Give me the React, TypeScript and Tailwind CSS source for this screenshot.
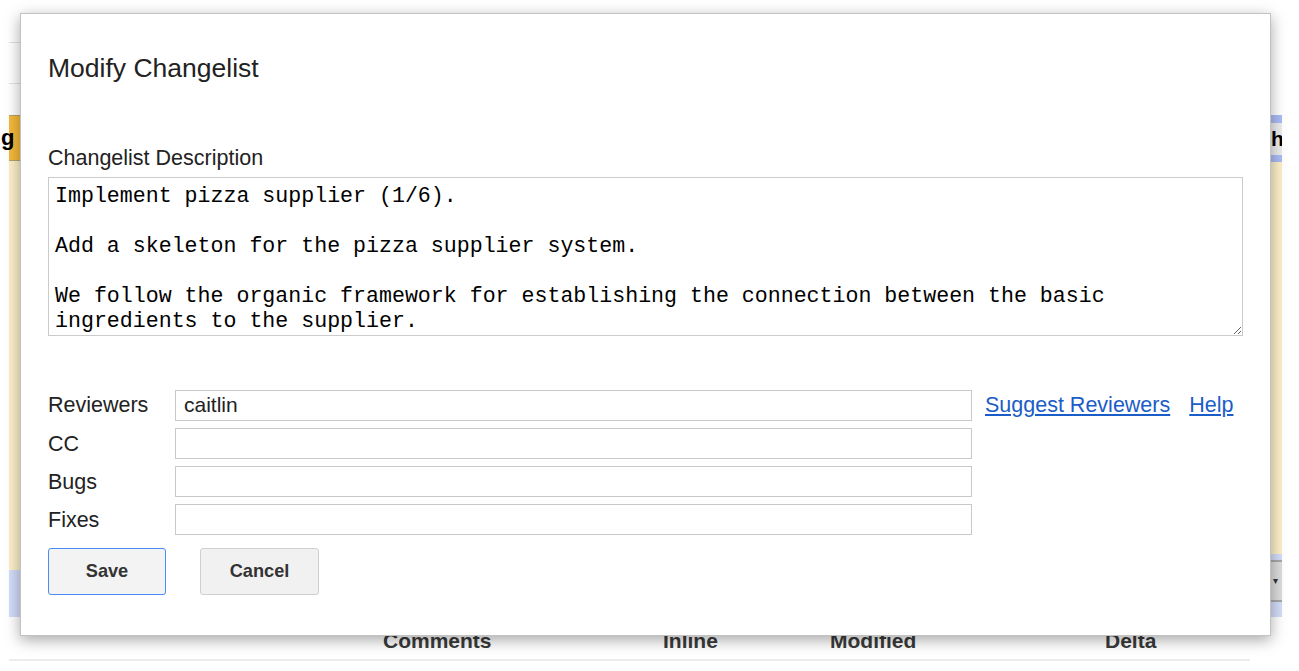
import React from "react";

const description = `Implement pizza supplier (1/6).

Add a skeleton for the pizza supplier system.

We follow the organic framework for establishing the connection between the basic ingredients to the supplier.`;

function Field({ label, value }: { label: string; value?: string }) {
  return (
    <div className="flex h-[31px] items-center">
      <div className="w-[127px] text-[21.5px] text-[#222]">{label}</div>
      <input
        readOnly
        defaultValue={value}
        className="h-[31px] w-[797px] border border-[#c9c9c9] bg-white px-[8px] text-[21px] text-[#222] outline-none"
      />
    </div>
  );
}

export default function App() {
  return (
    <div className="relative h-[671px] w-[1299px] overflow-hidden bg-white font-['Liberation_Sans',Arial,sans-serif]">
      {/* page behind the dialog */}
      <div className="flex flex-col pl-[9px]">
        <div className="h-[43px] w-[600px] border-b border-[#e2e2e2]" />
        <div className="h-[41px] w-[600px] border-b border-[#e2e2e2]" />
        <div className="h-[31px]" />
        <div className="flex h-[502px]">
          <div className="flex w-[1262px] flex-col">
            <div className="h-[46px] border-y border-[#b5a06a] bg-[#f4b93a] text-[22px] font-bold leading-[44px] text-black">
              <span className="-ml-[8px]">g</span>
            </div>
            <div className="h-[409px] bg-[#fdf0c8]" />
            <div className="h-[47px] bg-[#d3ddf9]" />
          </div>
          <div className="flex w-[11px] flex-col overflow-hidden">
            <div className="h-[8px] bg-[#a9bcf5]" />
            <div className="h-[32px] whitespace-nowrap bg-[#ececec] text-[21px] font-bold leading-[32px] text-black">
              he
            </div>
            <div className="h-[7px] bg-[#a9bcf5]" />
            <div className="h-[393px] bg-[#fdf0c8]" />
            <div className="h-[6px] bg-[#d3ddf9]" />
            <div className="h-[2px] bg-[#a8a8a8]" />
            <div className="h-[38px] bg-[#dcdcdc] text-[10px] leading-[38px] text-[#333]">
              <span className="ml-[2px]">▾</span>
            </div>
            <div className="h-[2px] bg-[#a8a8a8]" />
            <div className="h-[15px] bg-[#d3ddf9]" />
          </div>
        </div>
        <div className="flex h-[44px] w-[1241px] border-b-2 border-[#ececec] text-[21px] font-bold leading-[47px] text-[#3a3a3a]">
          <div className="w-[374px]" />
          <div className="w-[280px]">Comments</div>
          <div className="w-[167px]">Inline</div>
          <div className="w-[275px]">Modified</div>
          <div>Delta</div>
        </div>
      </div>

      {/* dialog */}
      <div className="absolute left-[20px] top-[13px] flex h-[623px] w-[1251px] flex-col border border-[#c2c2c2] bg-white px-[27px] pt-[39px] shadow-[0_4px_14px_rgba(0,0,0,0.35)]">
        <h1 className="text-[26.5px] leading-[30px] text-[#222]">Modify Changelist</h1>
        <div className="mt-[63px] text-[21.5px] leading-[25px] text-[#222]">Changelist Description</div>
        <textarea
          readOnly
          defaultValue={description}
          className="mt-[6px] h-[159px] w-full border border-[#cbcbcb] px-[6px] pt-[6px] font-['Liberation_Mono','Courier_New',monospace] text-[21.6px] leading-[25px] text-black outline-none"
        />
        <div className="mt-[53px] flex flex-col gap-[7px]">
          <div className="flex items-center">
            <Field label="Reviewers" value="caitlin" />
            <a href="#" className="ml-[13px] text-[21.5px] text-[#1a5dc8] underline">
              Suggest Reviewers
            </a>
            <a href="#" className="ml-[19px] text-[21.5px] text-[#1a5dc8] underline">
              Help
            </a>
          </div>
          <Field label="CC" />
          <Field label="Bugs" />
          <Field label="Fixes" />
        </div>
        <div className="mt-[13px] flex gap-[34px]">
          <button className="h-[47px] w-[118px] rounded-[3px] border-[1.5px] border-[#4a8cf7] bg-[#f3f3f3] text-[18.2px] font-bold text-[#333]">
            Save
          </button>
          <button className="h-[47px] w-[119px] rounded-[3px] border border-[#cfcfcf] bg-[#f1f1f1] text-[18.2px] font-bold text-[#333]">
            Cancel
          </button>
        </div>
      </div>
    </div>
  );
}
